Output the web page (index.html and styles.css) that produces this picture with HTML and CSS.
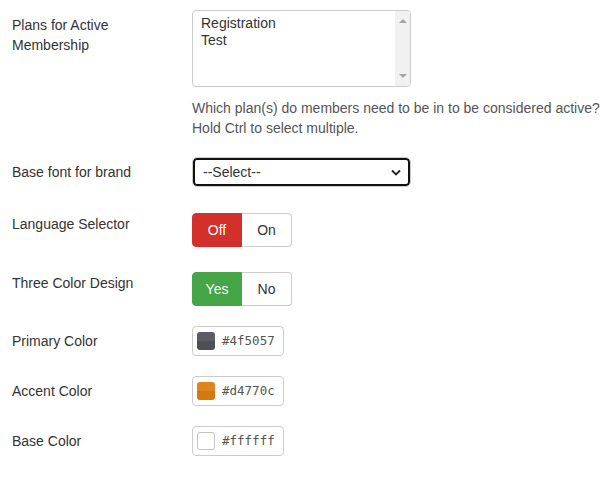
FILE: index.html
```html
<!DOCTYPE html>
<html lang="en">
<head>
    <meta charset="UTF-8">
    <meta name="viewport" content="width=device-width, initial-scale=1.0">
    <title>Membership Options</title>
    <link rel="stylesheet" href="styles.css">
</head>
<body>
    <form class="options">
        <div class="field field-plans">
            <div class="label">Plans for Active Membership</div>
            <div class="control">
                <div class="listbox">
                    <div class="listbox-options">
                        <div>Registration</div>
                        <div>Test</div>
                    </div>
                    <div class="scrollbar">
                        <span class="arrow-up"></span>
                        <span class="arrow-down"></span>
                    </div>
                </div>
                <p class="help">Which plan(s) do members need to be in to be considered active?<br>Hold Ctrl to select multiple.</p>
            </div>
        </div>

        <div class="field field-select">
            <div class="label">Base font for brand</div>
            <div class="control">
                <div class="select">
                    <span>--Select--</span>
                    <svg width="10" height="7" viewBox="0 0 10 7"><polyline points="1,1.5 5,5.5 9,1.5" fill="none" stroke="#222" stroke-width="1.8"/></svg>
                </div>
            </div>
        </div>

        <div class="field field-toggle">
            <div class="label label-tight">Language Selector</div>
            <div class="control">
                <div class="toggle">
                    <span class="btn btn-off">Off</span>
                    <span class="btn">On</span>
                </div>
            </div>
        </div>

        <div class="field">
            <div class="label label-tight">Three Color Design</div>
            <div class="control">
                <div class="toggle">
                    <span class="btn btn-yes">Yes</span>
                    <span class="btn">No</span>
                </div>
            </div>
        </div>

        <div class="field">
            <div class="label">Primary Color</div>
            <div class="control">
                <div class="color">
                    <span class="swatch swatch-primary"></span>
                    <span class="hex">#4f5057</span>
                </div>
            </div>
        </div>

        <div class="field">
            <div class="label">Accent Color</div>
            <div class="control">
                <div class="color">
                    <span class="swatch swatch-accent"></span>
                    <span class="hex">#d4770c</span>
                </div>
            </div>
        </div>

        <div class="field">
            <div class="label">Base Color</div>
            <div class="control">
                <div class="color">
                    <span class="swatch swatch-base"></span>
                    <span class="hex">#ffffff</span>
                </div>
            </div>
        </div>
    </form>
</body>
</html>
```

FILE: styles.css
```css
body {
    margin: 0;
    font-family: "Liberation Sans", Arial, sans-serif;
    font-size: 14px;
    line-height: 20px;
    color: #333;
    background: #fff;
}
.options {
    padding: 10px 0 0 12px;
}
.field {
    display: flex;
    align-items: flex-start;
    margin-bottom: 20px;
}
.field-plans {
    margin-bottom: 19px;
}
.field-select {
    margin-bottom: 26px;
}
.field-toggle {
    margin-bottom: 25px;
}
.label {
    width: 160px;
    margin-right: 20px;
    padding-top: 5px;
}
.label-tight {
    padding-top: 1px;
}

/* multi select */
.listbox {
    display: flex;
    width: 219px;
    height: 77px;
    box-sizing: border-box;
    border: 1px solid #ccc;
    border-radius: 4px;
    overflow: hidden;
}
.listbox-options {
    flex: 1;
    padding: 4px 8px;
    line-height: 17px;
}
.scrollbar {
    width: 15px;
    background: #f1f1f1;
    display: flex;
    flex-direction: column;
    justify-content: space-between;
    align-items: center;
    padding: 8px 0;
}
.arrow-up, .arrow-down {
    width: 0;
    height: 0;
    border-left: 4px solid transparent;
    border-right: 4px solid transparent;
}
.arrow-up {
    border-bottom: 4px solid #a3a3a3;
}
.arrow-down {
    border-top: 4px solid #a3a3a3;
}
.help {
    margin: 11px 0 0;
    color: #555;
}

/* dropdown */
.select {
    display: flex;
    align-items: center;
    justify-content: space-between;
    width: 219px;
    height: 30px;
    box-sizing: border-box;
    padding: 0 9px 0 10px;
    border: 1px solid #ccc;
    border-radius: 5px;
    box-shadow: inset 0 0 0 2px #111;
    color: #333;
}

/* yes / no buttons */
.toggle {
    display: flex;
}
.btn {
    width: 50px;
    height: 34px;
    box-sizing: border-box;
    display: flex;
    align-items: center;
    justify-content: center;
    border: 1px solid #ccc;
    background: #fff;
    color: #333;
    font-size: 14px;
}
.btn:first-child {
    border-radius: 4px 0 0 4px;
}
.btn:last-child {
    border-left: none;
    border-radius: 0 4px 4px 0;
}
.btn-off {
    background: #d3302c;
    border-color: #d3302c;
    color: #fff;
}
.btn-yes {
    background: #46a546;
    border-color: #46a546;
    color: #fff;
}

/* colour inputs */
.color {
    display: flex;
    align-items: center;
    width: 92px;
    height: 30px;
    box-sizing: border-box;
    padding-left: 4px;
    border: 1px solid #ccc;
    border-radius: 4px;
}
.swatch {
    width: 18px;
    height: 18px;
    box-sizing: border-box;
    border-radius: 3px;
}
.swatch-primary {
    background: linear-gradient(#5c5d64 50%, #4f5057 50%);
}
.swatch-accent {
    background: linear-gradient(#dc8420 50%, #d4770c 50%);
}
.swatch-base {
    background: #fff;
    border: 1px solid #c4c4c4;
}
.hex {
    margin-left: 7px;
    font-family: "DejaVu Sans Mono", "Liberation Mono", monospace;
    font-size: 12.5px;
    color: #555;
}
```
